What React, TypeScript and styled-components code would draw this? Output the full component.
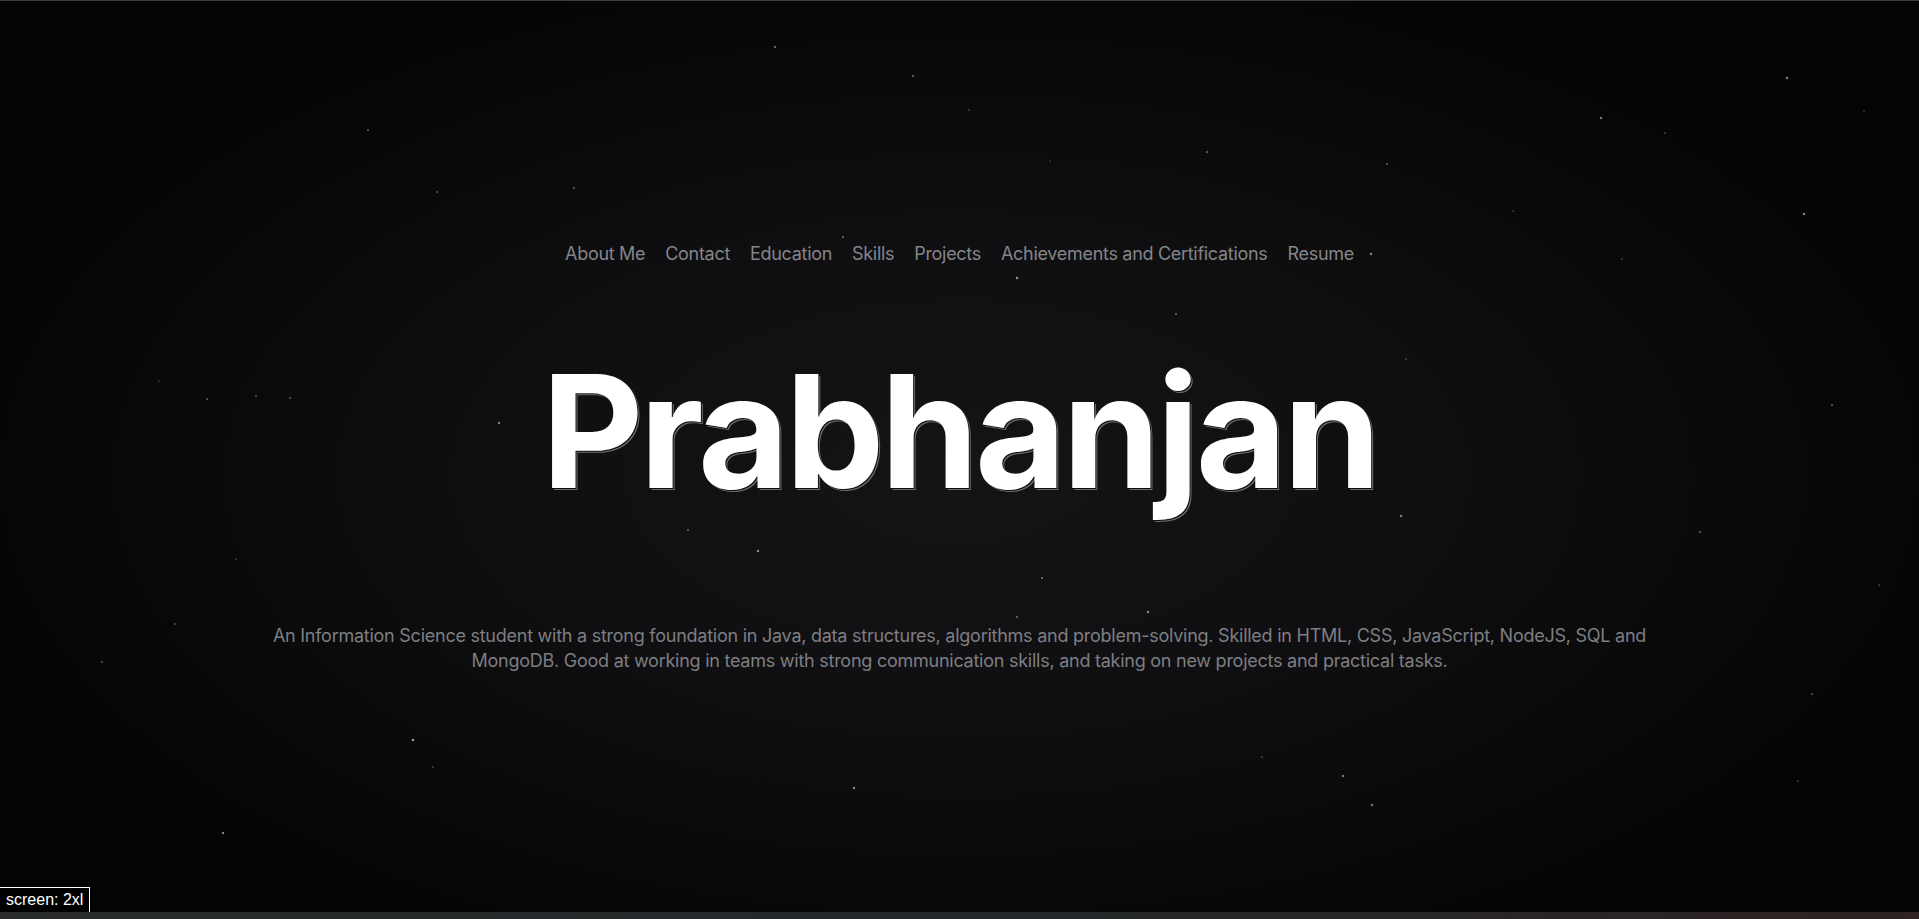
import React, { FC } from "react";
import styled, { createGlobalStyle } from "styled-components";

const stars: [number, number, number, number][] = [
    [775, 46, 1.6, 0.5], [913, 75, 1.6, 0.45], [1787, 77, 2, 0.5], [368, 129, 1.6, 0.35], [969, 109, 1.4, 0.3],
    [1601, 117, 2, 0.45], [1207, 151, 1.6, 0.4], [1387, 163, 1.6, 0.35], [437, 191, 1.6, 0.35], [574, 187, 1.6, 0.4],
    [1804, 213, 2, 0.5], [843, 236, 1.6, 0.45], [1371, 253, 2, 0.5], [1017, 277, 2, 0.55], [1176, 313, 1.6, 0.45],
    [207, 398, 1.6, 0.35], [256, 395, 1.6, 0.3], [290, 397, 1.6, 0.35], [499, 422, 2, 0.45], [1832, 404, 1.6, 0.4],
    [1401, 515, 2, 0.45], [1700, 531, 1.6, 0.4], [688, 529, 1.6, 0.35], [758, 550, 2, 0.5], [1042, 577, 1.6, 0.45],
    [1148, 611, 2, 0.5], [1017, 616, 1.6, 0.45], [1879, 584, 1.4, 0.3], [175, 623, 1.6, 0.3], [102, 661, 1.6, 0.35],
    [871, 659, 1.4, 0.35], [1812, 693, 1.6, 0.35], [413, 739, 2, 0.6], [433, 766, 1.4, 0.3], [1262, 756, 1.4, 0.3],
    [1343, 775, 2, 0.45], [854, 787, 2, 0.5], [1372, 804, 2, 0.45], [1798, 780, 1.4, 0.3], [223, 832, 2, 0.5],
    [1864, 110, 1.4, 0.3], [1665, 132, 1.4, 0.3], [159, 380, 1.4, 0.25], [236, 558, 1.4, 0.25], [1622, 258, 1.4, 0.3],
    [1406, 358, 1.4, 0.3], [1300, 425, 1.4, 0.25], [1513, 210, 1.4, 0.25], [1050, 160, 1.4, 0.2], [650, 460, 1.4, 0.25],
];

const navItems = ["About Me", "Contact", "Education", "Skills", "Projects", "Achievements and Certifications", "Resume"];

const App: FC = () => (
    <>
        <GlobalStyle />
        <Hero>
            <StarField width="1919" height="911" viewBox="0 0 1919 911">
                {stars.map(([x, y, r, o], i) => (
                    <circle key={i} cx={x} cy={y} r={r / 1.6} fill="#ffffff" opacity={o} />
                ))}
            </StarField>
            <Nav>
                {navItems.map((item) => (
                    <NavLink key={item} href="#">
                        {item}
                    </NavLink>
                ))}
            </Nav>
            <Title>Prabhanjan</Title>
            <Bio>
                An Information Science student with a strong foundation in Java, data structures, algorithms and
                problem-solving. Skilled in HTML, CSS, JavaScript, NodeJS, SQL and MongoDB. Good at working in teams with
                strong communication skills, and taking on new projects and practical tasks.
            </Bio>
        </Hero>
        <NextSection />
        <ScreenBadge>screen: 2xl</ScreenBadge>
    </>
);

export default App;

const GlobalStyle = createGlobalStyle`
    html, body {
        margin: 0;
        padding: 0;
        background: #050505;
        overflow: hidden;
    }
    * {
        box-sizing: border-box;
    }
`;

const Hero = styled.section`
    position: relative;
    height: 912px;
    border-top: 1px solid #3d3d3d;
    display: flex;
    flex-direction: column;
    align-items: center;
    overflow: hidden;
    font-family: Inter, "Noto Sans", sans-serif;
    background:
        radial-gradient(ellipse 55% 60% at 50% 52%, #141417 0%, #0f0f11 45%, #080808 80%, #040404 100%);
`;

const StarField = styled.svg`
    position: absolute;
    top: 0;
    left: 0;
    pointer-events: none;
`;

const Nav = styled.nav`
    position: relative;
    margin-top: 241px;
    display: flex;
    gap: 20px;
`;

const NavLink = styled.a`
    color: #858589;
    font-size: 18px;
    line-height: 24px;
    text-decoration: none;
    letter-spacing: -0.3px;
`;

const Title = styled.h1`
    position: relative;
    margin: 87px 0 0;
    color: #ffffff;
    font-size: 157px;
    font-weight: 700;
    line-height: 1;
    letter-spacing: -3.6px;
    text-shadow: 1px 1px 0 #0d0d0f, 2px 2px 0 #6c6c6c;
`;

const Bio = styled.p`
    position: relative;
    margin: 113px 0 0;
    max-width: 1400px;
    color: #7e7e83;
    font-size: 18px;
    line-height: 25px;
    letter-spacing: -0.25px;
    text-align: center;
`;

const NextSection = styled.div`
    height: 7px;
    background: linear-gradient(90deg, #2a2c2c 0%, #23282a 50%, #2a2424 85%, #2e2222 100%);
`;

const ScreenBadge = styled.div`
    position: fixed;
    left: 0;
    bottom: 7px;
    height: 25px;
    padding: 0 6px;
    background: #000000;
    border: 1px solid #ffffff;
    border-left: none;
    border-bottom: none;
    color: #ffffff;
    font-family: "Liberation Sans", Arial, sans-serif;
    font-size: 16px;
    line-height: 24px;
`;
